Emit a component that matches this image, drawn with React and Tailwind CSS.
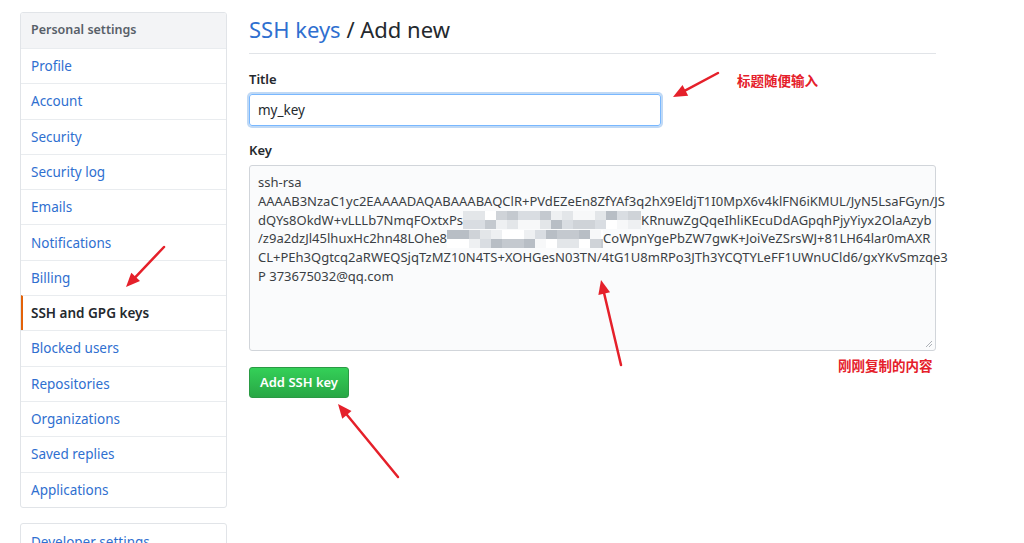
import React from 'react'

const navItems = [
  'Profile',
  'Account',
  'Security',
  'Security log',
  'Emails',
  'Notifications',
  'Billing',
  'SSH and GPG keys',
  'Blocked users',
  'Repositories',
  'Organizations',
  'Saved replies',
  'Applications',
]

const greys = ['#d9dde2', '#eef0f2', '#c4c9cf', '#f7f8f9', '#b8bec5', '#e3e6e9', '#cfd3d8', '#ffffff']

function Mosaic({ width, seed }) {
  const cols = Math.ceil(width / 11)
  const cells = []
  for (let r = 0; r < 2; r++) {
    for (let c = 0; c < cols; c++) {
      const g = greys[(c * 7 + r * 3 + seed * 5 + ((c * c) % 5)) % greys.length]
      cells.push(<rect key={`${r}-${c}`} x={c * 11} y={r * 9} width="11" height="9" fill={g} />)
    }
  }
  return (
    <svg width={width} height="18" className="shrink-0 blur-[0.6px]">
      {cells}
    </svg>
  )
}

function Arrow({ x1, y1, x2, y2 }) {
  const dx = x2 - x1
  const dy = y2 - y1
  const len = Math.sqrt(dx * dx + dy * dy)
  const ux = dx / len
  const uy = dy / len
  const hl = 14
  const hw = 6
  const bx = x2 - ux * hl
  const by = y2 - uy * hl
  const p1 = `${x2},${y2}`
  const p2 = `${bx - uy * hw},${by + ux * hw}`
  const p3 = `${bx + uy * hw},${by - ux * hw}`
  return (
    <g>
      <line x1={x1} y1={y1} x2={bx + ux * 2} y2={by + uy * 2} stroke="#e5202a" strokeWidth="2.5" strokeLinecap="round" />
      <polygon points={`${p1} ${p2} ${p3}`} fill="#e5202a" />
    </g>
  )
}

function Sidebar() {
  return (
    <div className="w-[207px] shrink-0">
      <div className="border border-[#e1e4e8] rounded-[3px] overflow-hidden">
        <div className="h-[35px] bg-[#f3f4f6] px-[10px] flex items-center text-[12.5px] font-semibold text-[#586069]">
          Personal settings
        </div>
        {navItems.map(item => {
          const active = item === 'SSH and GPG keys'
          return (
            <div
              key={item}
              className={`h-[35.3px] border-t border-[#e9ecef] flex items-center text-[13.5px] ${active ? 'border-l-2 border-l-[#e36209] pl-[8px] text-[#24292e] font-semibold' : 'pl-[10px] text-[#2f6fd0]'}`}
            >
              {item}
            </div>
          )
        })}
      </div>
      <div className="mt-[15px] border border-[#e1e4e8] rounded-[3px] h-[40px] px-[10px] pt-[8px] text-[13.5px] text-[#2f6fd0]">
        Developer settings
      </div>
    </div>
  )
}

function KeyBox() {
  return (
    <div className="h-[186px] border border-[#d1d5da] rounded-[3px] bg-[#fafbfc] px-[8px] pt-[7px] text-[13px] leading-[18.8px] text-[#3a3f44] whitespace-nowrap relative">
      <div>ssh-rsa</div>
      <div>AAAAB3NzaC1yc2EAAAADAQABAAABAQClR+PVdEZeEn8ZfYAf3q2hX9EldjT1I0MpX6v4klFN6iKMUL/JyN5LsaFGyn/JS</div>
      <div className="flex items-center">
        <span>dQYs8OkdW+vLLLb7NmqFOxtxPs</span>
        <Mosaic width={178} seed={1} />
        <span>KRnuwZgQqeIhliKEcuDdAGpqhPjyYiyx2OlaAzyb</span>
      </div>
      <div className="flex items-center">
        <span>/z9a2dzJl45lhuxHc2hn48LOhe8</span>
        <Mosaic width={156} seed={4} />
        <span>CoWpnYgePbZW7gwK+JoiVeZSrsWJ+81LH64lar0mAXR</span>
      </div>
      <div>CL+PEh3Qgtcq2aRWEQSjqTzMZ10N4TS+XOHGesN03TN/4tG1U8mRPo3JTh3YCQTYLeFF1UWnUCld6/gxYKvSmzqe3</div>
      <div>P 373675032@qq.com</div>
      <svg className="absolute right-[2px] bottom-[2px]" width="8" height="8" viewBox="0 0 8 8">
        <line x1="7" y1="1" x2="1" y2="7" stroke="#9aa0a6" strokeWidth="0.8" />
        <line x1="7" y1="4" x2="4" y2="7" stroke="#9aa0a6" strokeWidth="0.8" />
      </svg>
    </div>
  )
}

export default function App() {
  return (
    <div className="relative w-[1024px] h-[543px] overflow-hidden bg-white font-['Noto_Sans',sans-serif]">
      <div className="flex pl-[20px] pt-[12px] gap-[22px]">
        <Sidebar />
        <div className="w-[687px]">
          <h1 className="mt-[1px] pb-[8px] border-b border-[#e1e4e8] text-[22px] leading-[32px] text-[#24292e] font-normal">
            <span className="text-[#2f6fd0]">SSH keys</span> / Add new
          </h1>
          <div className="mt-[15px] text-[13px] leading-[20px] font-semibold text-[#24292e]">Title</div>
          <div className="mt-[5px] w-[412px] h-[32px] border border-[#79b8ff] rounded-[3px] shadow-[0_0_0_2px_rgba(3,102,214,0.25)] px-[8px] flex items-center text-[13.5px] text-[#24292e]">
            my_key
          </div>
          <div className="mt-[14px] text-[13px] leading-[20px] font-semibold text-[#24292e]">Key</div>
          <div className="mt-[5px]">
            <KeyBox />
          </div>
          <button className="mt-[16px] h-[31px] w-[100px] rounded-[3px] border border-[#2a9a44] bg-gradient-to-b from-[#34d058] to-[#28a745] text-white text-[13px] font-semibold">
            Add SSH key
          </button>
        </div>
      </div>

      <div className="absolute left-[737px] top-[70px] text-[13.5px] font-bold text-[#e5202a] font-['Noto_Sans_CJK_SC',sans-serif]">
        标题随便输入
      </div>
      <div className="absolute left-[838px] top-[355px] text-[13.5px] font-bold text-[#e5202a] font-['Noto_Sans_CJK_SC',sans-serif]">
        刚刚复制的内容
      </div>

      <svg className="absolute left-0 top-0 pointer-events-none" width="1024" height="543">
        <Arrow x1={718} y1={73} x2={673} y2={97} />
        <Arrow x1={164} y1={247} x2={126} y2={287} />
        <Arrow x1={621} y1={365} x2={601} y2={280} />
        <Arrow x1={398} y1={477} x2={338} y2={404} />
      </svg>
    </div>
  )
}
